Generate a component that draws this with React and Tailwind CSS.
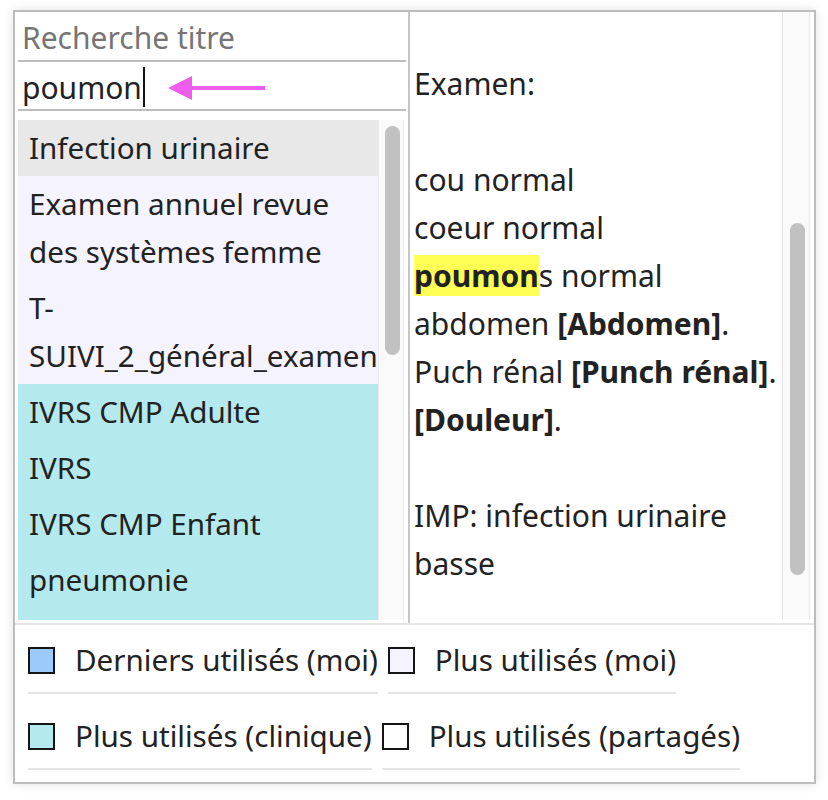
const GRAY = ["Infection urinaire"];
const MINE = ["Examen annuel revue des systèmes femme", "T-SUIVI_2_général_examens"];
const CLINIC = ["IVRS CMP Adulte", "IVRS", "IVRS CMP Enfant", "pneumonie"];

function ListItem({ label, tone }) {
  const bg =
    tone === "gray" ? "bg-[#e8e8e8]" : tone === "mine" ? "bg-[#f4f3fe]" : "bg-[#b4e9ed]";
  return (
    <div className={`${bg} overflow-hidden py-1 pl-[11px] pr-1 text-[29.6px] leading-[48px]`}>
      {label}
    </div>
  );
}

function Legend({ swatch, label }) {
  return (
    <div className="flex items-center border-b-2 border-[#e4e4e4] py-2 text-[29.6px] leading-[48px]">
      <span className={`h-[27px] w-[27px] shrink-0 border-2 border-[#151515] ${swatch}`} />
      <span className="ml-[20px] whitespace-nowrap">{label}</span>
    </div>
  );
}

function Line({ children }) {
  return <div className="min-h-[48px] leading-[48px] whitespace-nowrap">{children}</div>;
}

export default function App() {
  return (
    <div
      className="min-h-[800px] bg-white pt-[10px] text-[30px] text-[#222]"
      style={{ fontFamily: '"Noto Sans", "Open Sans", sans-serif' }}
    >
      <div className="ml-[13px] w-[803px] border-2 border-[#bdbdbd] shadow-[0_0_10px_rgba(0,0,0,0.12)]">
        <div className="flex h-[611px]">
          {/* left column */}
          <div className="flex w-[395px] shrink-0 flex-col border-r-2 border-[#c6c6c6] pl-[3px]">
            <div className="mr-[2px] h-[50px] border-b-2 border-[#bdbdbd] pl-[4px] pt-[1px] leading-[50px] text-[#757575]">
              Recherche titre
            </div>
            <div className="relative mr-[2px] flex h-[49px] items-center border-b-2 border-[#bdbdbd] pl-[4px] pt-[3px]">
              <span>poumon</span>
              <span className="ml-[1px] inline-block h-[40px] w-[2px] bg-[#111]" />
              <svg
                className="absolute left-[150px] top-[14px]"
                width="98"
                height="24"
                viewBox="0 0 98 24"
              >
                <polygon points="0,12 24,0 24,24" fill="#ef5cf0" />
                <rect x="22" y="10" width="75" height="4" fill="#ef5cf0" />
              </svg>
            </div>
            <div className="mt-[9px] flex h-[500px]">
              <div className="w-[360px] overflow-hidden bg-[#b4e9ed]">
                {GRAY.map((l) => (
                  <ListItem key={l} label={l} tone="gray" />
                ))}
                {MINE.map((l) => (
                  <ListItem key={l} label={l} tone="mine" />
                ))}
                {CLINIC.map((l) => (
                  <ListItem key={l} label={l} tone="clinic" />
                ))}
              </div>
              <div className="w-[26px] border-x border-[#ececec] bg-[#fafafa]">
                <div className="ml-[6px] mt-[6px] h-[229px] w-[15px] rounded-full bg-[#c1c1c1]" />
              </div>
            </div>
          </div>

          {/* right column */}
          <div className="flex flex-1 pr-[4px]">
            <div className="flex-1 overflow-hidden pl-[4px]">
              <Line>&nbsp;</Line>
              <Line>Examen:</Line>
              <Line>&nbsp;</Line>
              <Line>cou normal</Line>
              <Line>coeur normal</Line>
              <Line>
                <mark className="bg-[#ffff55] font-bold text-[#222]">poumon</mark>s normal
              </Line>
              <Line>
                abdomen <b>[Abdomen]</b>.
              </Line>
              <Line>
                Puch rénal <b>[Punch rénal]</b>.
              </Line>
              <Line>
                <b>[Douleur]</b>.
              </Line>
              <Line>&nbsp;</Line>
              <Line>IMP: infection urinaire</Line>
              <Line>basse</Line>
            </div>
            <div className="mb-[3px] w-[28px] border-x border-[#e6e6e6] bg-[#fafafa]">
              <div className="ml-[7px] mt-[211px] h-[352px] w-[15px] rounded-full bg-[#c1c1c1]" />
            </div>
          </div>
        </div>

        {/* legend */}
        <div className="flex flex-wrap gap-[10px] border-t-2 border-[#e6e6e6] pb-[12px] pl-[13px] pt-[3px]">
          <Legend swatch="bg-[#9ccbfb]" label="Derniers utilisés (moi)" />
          <Legend swatch="bg-[#f4f3fe]" label="Plus utilisés (moi)" />
          <Legend swatch="bg-[#b4e9ed]" label="Plus utilisés (clinique)" />
          <Legend swatch="bg-white" label="Plus utilisés (partagés)" />
        </div>
      </div>
    </div>
  );
}
